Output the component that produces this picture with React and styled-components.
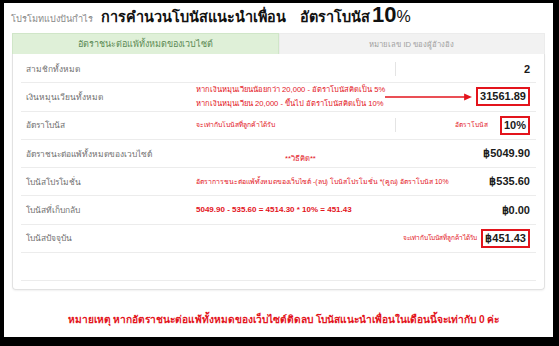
import React from 'react';
import styled, { createGlobalStyle } from 'styled-components';

const GlobalStyle = createGlobalStyle`
  html, body {
    margin: 0;
    padding: 0;
    background: #000;
  }
  body {
    font-family: "Liberation Sans", Tahoma, "Noto Sans", sans-serif;
    -webkit-font-smoothing: antialiased;
  }
`;

const Frame = styled.div`
  margin: 3px 6px 0 4px;
  height: 334px;
  background: #fff;
  padding: 0 8px;
  box-sizing: border-box;
  display: flex;
  flex-direction: column;
`;

const Header = styled.div`
  height: 27px;
  display: flex;
  align-items: flex-end;
  padding: 0 0 4px 0;
  box-sizing: border-box;
`;

const Crumb = styled.span`
  font-size: 9.2px;
  color: #888;
  margin-left: -1px;
  margin-right: 8px;
`;

const Title = styled.h1`
  margin: 0;
  font-size: 14.4px;
  font-weight: bold;
  color: #111;
  line-height: 1;
  display: flex;
  align-items: baseline;
  gap: 14px;
`;

const Big = styled.span`
  font-size: 22px;
  font-weight: bold;
  margin-left: 2px;
`;

const Pct = styled.span`
  font-size: 16px;
  font-weight: normal;
`;

const Tabs = styled.div`
  display: flex;
  height: 21px;
  margin-top: 3px;
`;

const Tab = styled.div`
  flex: 1;
  display: flex;
  align-items: center;
  justify-content: center;
  font-size: ${({ active }) => (active ? 9 : 7.7)}px;
  background: ${({ active }) => (active ? '#dff0d8' : '#f2f2f2')};
  color: ${({ active }) => (active ? '#5c8a55' : '#a0a0a0')};
  border: 1px solid ${({ active }) => (active ? '#d0e6c8' : '#ececec')};
  border-bottom: none;
`;

const Panel = styled.div`
  border: 1px solid #e2e2e2;
  border-top: none;
  border-radius: 0 0 4px 4px;
  padding: 1px 8px 8px;
  box-shadow: 0 1px 2px rgba(0, 0, 0, 0.06);
`;

const Row = styled.div`
  display: flex;
  align-items: center;
  height: 28.3px;
  box-sizing: border-box;
  border-bottom: 1px solid #ececec;
`;

const Label = styled.div`
  width: 170px;
  padding-left: 5px;
  font-size: 8.4px;
  color: #707070;
  flex: none;
`;

const Middle = styled.div`
  flex: 1;
  display: flex;
  align-items: center;
  min-width: 0;
  padding-left: ${({ indent }) => indent || 0}px;
  align-self: ${({ low }) => (low ? 'flex-end' : 'center')};
  padding-bottom: ${({ low }) => (low ? '1px' : '0')};
`;

const Note = styled.div`
  color: #e3141c;
  font-size: ${({ size }) => size || 7.6}px;
  font-weight: ${({ bold }) => (bold ? 'bold' : 'normal')};
  line-height: 14px;
  white-space: nowrap;
`;

const Value = styled.div`
  flex: none;
  position: relative;
  width: ${({ wide }) => (wide ? '135px' : 'auto')};
  display: flex;
  align-items: center;
  justify-content: flex-end;
  gap: ${({ gap }) => gap || 0}px;
  padding-right: 6px;
  font-size: 11px;
  font-weight: bold;
  color: #1a1a1a;

  ${({ divided }) =>
    divided &&
    `
    &::before {
      content: '';
      position: absolute;
      left: 0;
      top: 50%;
      height: 14px;
      margin-top: -7px;
      border-left: 1px solid #e4e4e4;
    }
  `}
`;

const Boxed = styled.span`
  border: 2px solid #e3141c;
  padding: 1px 2px;
  line-height: 13px;
`;

const Arrow = styled.svg`
  flex: 1;
  height: 8px;
  margin: 0 4px 0 0;
`;

const Footer = styled.div`
  flex: 1;
  display: flex;
  align-items: center;
  justify-content: center;
  padding-left: 10px;
  padding-top: 10px;
  font-size: 10.2px;
  font-weight: bold;
  color: #e3141c;
`;

export default function App() {
  return (
    <>
      <GlobalStyle />
      <Frame>
        <Header>
          <Crumb>โปรโมทแบ่งปันกำไร</Crumb>
          <Title>
            <span>การคำนวนโบนัสแนะนำเพื่อน</span>
            <span>
              อัตราโบนัส<Big>10</Big>
              <Pct>%</Pct>
            </span>
          </Title>
        </Header>

        <Tabs>
          <Tab active>อัตราชนะต่อแพ้ทั้งหมดของเวบไซต์</Tab>
          <Tab>หมายเลข ID ของผู้อ้างอิง</Tab>
        </Tabs>

        <Panel>
          <Row>
            <Label>สามชิกทั้งหมด</Label>
            <Middle />
            <Value wide divided>2</Value>
          </Row>

          <Row>
            <Label>เงินหมุนเวียนทั้งหมด</Label>
            <Middle>
              <div>
                <Note>หากเงินหมุนเวียนน้อยกว่า 20,000 - อัตราโบนัสคิดเป็น 5%</Note>
                <Note>หากเงินหมุนเวียน 20,000 - ขึ้นไป อัตราโบนัสคิดเป็น 10%</Note>
              </div>
              <Arrow viewBox="0 0 100 8" preserveAspectRatio="none">
                <line x1="0" y1="4" x2="94" y2="4" stroke="#e3141c" strokeWidth="1.4" />
                <polygon points="91,0.5 100,4 91,7.5" fill="#e3141c" />
              </Arrow>
            </Middle>
            <Value>
              <Boxed>31561.89</Boxed>
            </Value>
          </Row>

          <Row>
            <Label>อัตราโบนัส</Label>
            <Middle>
              <Note size={6.8}>จะเท่ากับโบนัสที่ลูกค้าได้รับ</Note>
            </Middle>
            <Value wide divided gap={12}>
              <Note size={6.6}>อัตราโบนัส</Note>
              <Boxed>10%</Boxed>
            </Value>
          </Row>

          <Row>
            <Label>อัตราชนะต่อแพ้ทั้งหมดของเวบไซต์</Label>
            <Middle indent={89} low>
              <Note size={7.6}>**วิธีคิด**</Note>
            </Middle>
            <Value>฿5049.90</Value>
          </Row>

          <Row>
            <Label>โบนัสโปรโมชั่น</Label>
            <Middle>
              <Note size={6.9}>อัตราการชนะต่อแพ้ทั้งหมดของเว็บไซต์ -(ลบ) โบนัสโปรโมชั่น *(คูณ) อัตราโบนัส 10%</Note>
            </Middle>
            <Value>฿535.60</Value>
          </Row>

          <Row>
            <Label>โบนัสที่เก็บกลับ</Label>
            <Middle>
              <Note bold size={8}>5049.90 - 535.60 = 4514.30 * 10% = 451.43</Note>
            </Middle>
            <Value>฿0.00</Value>
          </Row>

          <Row>
            <Label>โบนัสปัจจุบัน</Label>
            <Middle />
            <Value gap={4}>
              <Note size={6.5}>จะเท่ากับโบนัสที่ลูกค้าได้รับ</Note>
              <Boxed>฿451.43</Boxed>
            </Value>
          </Row>

          <Row />
        </Panel>

        <Footer>
          หมายเหตุ หากอัตราชนะต่อแพ้ทั้งหมดของเว็บไซต์ติดลบ โบนัสแนะนำเพื่อนในเดือนนี้จะเท่ากับ 0 ค่ะ
        </Footer>
      </Frame>
    </>
  );
}
